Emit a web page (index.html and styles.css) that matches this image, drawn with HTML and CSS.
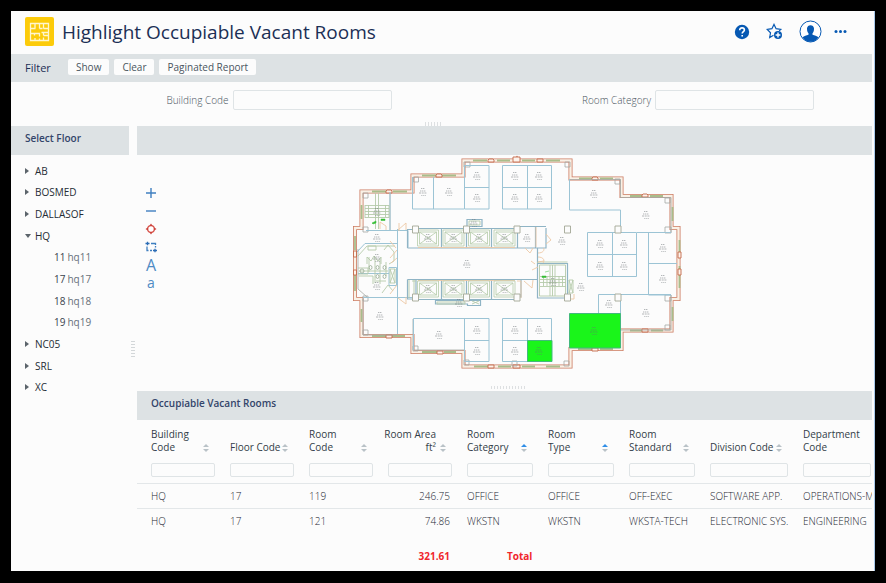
FILE: index.html
```html
<!DOCTYPE html>
<html lang="en">
<head>
<meta charset="utf-8">
<title>Highlight Occupiable Vacant Rooms</title>
<link rel="stylesheet" href="styles.css">
</head>
<body>
<div class="app">
  <header class="header">
    <svg class="logo" viewBox="0 0 29 29" aria-hidden="true">
      <rect width="29" height="29" rx="2" fill="#fccb0a"/>
      <path d="M5.500 6.500h18v17h-18z M10 6.500v5 M5.500 11.500h5 M14.500 6.500v5 M14.500 11.500h3 M18.500 6.500v5 M18.500 11.500h5 M5.500 16.500h9v3 M9.500 16.500v2 M14.500 21.500v2 M10 21v2.500 M23.500 15.500h-7 M18.500 15.500v3 M18.500 20.500v3 M18.500 18.500h5" fill="none" stroke="#fff6cf" stroke-width="1.300"/>
    </svg>
    <h1>Highlight Occupiable Vacant Rooms</h1>
    <nav class="actions">
      <button aria-label="Help"><svg width="16" height="16" viewBox="0 0 16 16"><circle cx="8" cy="8" r="7.200" fill="#0759b3"/><path d="M5.700 6.300c0-3.400 4.700-3 4.700-.3 0 1.600-2.200 1.700-2.200 3.500M8.200 11v1.600" fill="none" stroke="#fff" stroke-width="1.600"/></svg></button>
      <button aria-label="Add favorite"><svg width="17" height="17" viewBox="0 0 17 17"><path d="M7.500 12.300l-3.800 2.200.8-4.700L1.200 6.400l4.700-.7L8 1.400l2.100 4.300 4.700.7-1.600 1.500" fill="none" stroke="#0759b3" stroke-width="1.200"/><circle cx="12" cy="12" r="4" fill="#0759b3"/><path d="M12 9.600v4.800M9.600 12h4.800" stroke="#fff" stroke-width="1.400"/></svg></button>
      <button aria-label="Profile"><svg width="23" height="23" viewBox="0 0 23 23"><circle cx="11.500" cy="11.500" r="10.500" fill="#fff" stroke="#0759b3"/><path d="M8 8.500C8 4 15 4 15 8.500c0 2.500-.6 3.700-1.500 4.700v1.600c2 .8 4.500 1.200 6 2.400-3.500 6-12.500 6-16 0 1.500-1.200 4-1.600 6-2.400v-1.600C8.600 12.200 8 11 8 8.500z" fill="#0759b3"/></svg></button>
      <button aria-label="More"><svg width="13" height="5" viewBox="0 0 13 5"><g fill="#0759b3"><circle cx="2" cy="2.500" r="1.500"/><circle cx="6.500" cy="2.500" r="1.500"/><circle cx="11" cy="2.500" r="1.500"/></g></svg></button>
    </nav>
  </header>

  <section class="filterbar">
    <h2>Filter</h2>
    <button>Show</button>
    <button>Clear</button>
    <button>Paginated Report</button>
  </section>
  <form class="filters">
    <div class="field"><label for="bl">Building Code</label><input id="bl" type="text"></div>
    <div class="field"><label for="rc">Room Category</label><input id="rc" type="text"></div>
  </form>
  <div class="grip top"><span></span></div>

  <div class="body">
    <aside class="side">
      <h2 class="bar">Select Floor</h2>
      <ul class="tree">
        <li>AB</li>
        <li>BOSMED</li>
        <li>DALLASOF</li>
        <li class="open">HQ</li>
        <li class="leaf"><b>11</b> hq11</li>
        <li class="leaf"><b>17</b> hq17</li>
        <li class="leaf"><b>18</b> hq18</li>
        <li class="leaf"><b>19</b> hq19</li>
        <li>NC05</li>
        <li>SRL</li>
        <li>XC</li>
      </ul>
    </aside>
    <div class="gutter"><span></span></div>
    <main class="main">
      <div class="bar"></div>
      <div class="drawing">
        <div class="tools">
          <button aria-label="Zoom in"><svg width="12" height="12" viewBox="0 0 12 12"><path d="M6 1v10M1 6h10" stroke="#3f7fc0" stroke-width="1.400"/></svg></button>
          <button aria-label="Zoom out"><svg width="12" height="12" viewBox="0 0 12 12"><path d="M1 6h10" stroke="#3f7fc0" stroke-width="1.400"/></svg></button>
          <button aria-label="Center"><svg width="12" height="12" viewBox="0 0 12 12"><circle cx="6" cy="6" r="3.300" fill="#fff" stroke="#d8524a" stroke-width="1.300"/><path d="M6 .5L7.500 2.800h-3zM6 11.500L7.500 9.200h-3zM.5 6L2.800 4.500v3zM11.500 6L9.200 4.500v3z" fill="#c93a32"/></svg></button>
          <button aria-label="Zoom window"><svg width="12" height="12" viewBox="0 0 12 12"><path d="M2 5.500V9.500h1.500M5 9.500h2M6 2.500h4.500V4M10.500 5v1.500" fill="none" stroke="#3f7fc0" stroke-width="1.300"/><path d="M.5 2.500h4M2.500 .8v3.400M8 9.500h4M10 7.800v3.400" stroke="#2b6cb5" stroke-width="1.300"/></svg></button>
          <button aria-label="Larger text" class="big">A</button>
          <button aria-label="Smaller text" class="small">a</button>
        </div>
        <svg class="plan" viewBox="350 155 335 218" role="img" aria-label="Floor plan">
          <defs>
            <g id="t" stroke="#6a7176" stroke-width=".7"><path d="M-2-3.500h4M-3-1h6" stroke-dasharray="1.400 .6" opacity=".7"/><path d="M-4 1h8" stroke-dasharray="2 .7" opacity=".7"/><path d="M-2 3.500h5" stroke-dasharray="1.500 .5" opacity=".5"/></g>
            <g id="lift" fill="none" stroke="#b5cbaa" stroke-width=".8"><path d="M-10.500-8h21V8h-21zM-8.500-6h17V6h-17zM-8.500-6L8.500 6M8.500-6L-8.500 6"/><use href="#t"/></g>
            <g id="col"><path d="M-3-3.500h6v7h-6z" fill="#fcfcfc" stroke="#a3a795" stroke-width=".9"/></g>
            <path id="shell" d="M355 263V228h6.500v-36.500h51v-16h51v-15h52.500l1-1.500 1 1.500h52.500v18h51v17.500h50V228h7v71h-7v31.500h-50V349h-51v17.500H463.500V352h-51v-16h-51v-37H355z"/>
          </defs>
          <use href="#shell" fill="none" stroke="#cb7a61" stroke-width="4"/>
          <use href="#shell" fill="none" stroke="#f9f1e6" stroke-width="2.400"/>
          <g fill="none" stroke="#a9bd8b" stroke-width="1.800">
            <path d="M372 191.500h15M393 191.500h14M422 175.500h16M442 175.500h14M473 160.500h14M497 160.500h13M522 160.500h13M546 160.500h14M579 178.500h13M600 178.500h13M630 196h12M650 196h13M672.500 207v14M679.500 240v14M679.500 266v22M672.500 307v14M630 330.500h12M651 330.500h12M578 349h14M600 349h13M474 366.500h14M498 366.500h13M522 366.500h13M546 366.500h14M422 352h15M444 352h12M372 336h14M392 336h13M361.500 309v13M355 236v14M355 271v20M361.500 205v14"/>
          </g>
          <g fill="#fcf3ec" stroke="#c4694a" stroke-width=".9">
            <path d="M386 193v-2l1-1h4l1 1v2zM436 177v-2l1-1h4l1 1v2zM488 162v-2l1-1h4l1 1v2zM592 180v-2l1-1h4l1 1v2zM642 197v-2l1-1h4l1 1v2zM642 332v-3h6v3zM592 351v-3h6v3zM488 368v-3h6v3zM437 354v-3h6v3zM386 338v-3h6v3zM353.500 251h3v6h-3zM353.500 270h3v5h-3zM678 252h3v6h-3zM678 269h3v6h-3zM513 157h7v5h-7zM537 159h6v3h-6zM513 365h7v3h-7z"/>
          </g>
          <g fill="none" stroke="#a5a8a4" stroke-width=".8">
            <path d="M363 193h5v5h-5zM413.500 177h5v5h-5zM464 162h6v5h-6zM565 162h5v5h-5zM615 179h5v5h-5zM665 198h5v5h-5zM665 227h6v6h-6zM665 295h6v6h-6zM665 325h5v5h-5zM564 361h5v5h-5zM464 360h5v5h-5zM413 346h5v5h-5zM363 330h5v5h-5zM363 296h5v5h-5zM363 227h5v5h-5zM512 361h5v5h-5z"/>
            <path d="M569.500 179.500h51v18h50.500v35M671 295v35h-50.500M363 299v36h34M413 319v31h51M390 193v38M358 249v40l9 8"/>
          </g>

          <g fill="none" stroke="#9cc4d5" stroke-width="1">
            <path d="M412.500 177v32H464M433.500 177v32M464.500 165.500h24.500v43.500h-24.500zM464.500 187.500h24.500M502.500 165.500h49v43.500h-49zM502.500 187.500h49M527.500 165.500v43.500"/>
            <path d="M569.500 179v31h51v23M587.500 232.500h49v44h-49zM587.500 254.500h49M612.500 232.500v44M637 232.500h34M648.500 232.500v62.500M648.500 263.500h28.500M648.500 295H671M598.500 313v-18.500H671M620.500 295v36"/>
            <path d="M413.500 350v-31.500H489v43h-24.500v-43M464.500 340.500h24.500M502.500 318.500h49v43h-49zM502.500 340.500h49M527.500 318.500v43"/>
            <path d="M397.500 229v105M366 230.500h42v17M363 297.500h50M390 192v39M357 252l8-8.500h32M389 267.500h7.500v18H389zM358 273.500h31"/>
          </g>
          <g fill="none" stroke="#8fb4c5" stroke-width="1.200">
            <path d="M407.500 248V229.500h5M407.500 248H546V228M418 228.500h97M441.500 228v20M466.500 228v20M491.500 228v20M517.500 226v22M520 226.500h26M535.500 226v22M467 219.500h15v7h-15z"/>
            <path d="M407.500 279.500V299h5M407.500 279.500H521v18M416 280v16M418 299.500h96M441.500 280v20M466.500 280v20M491.500 280v20M435.500 300.500h45v5h-13v-1.500h-32z"/>
            <path d="M537.500 263.500h30V298h-30zM537.500 248v15M521 279.500h16"/>
          </g>
          <g fill="none" stroke="#b5cbaa" stroke-width=".9">
            <path d="M375.500 193v36M378.500 193v36M365 205.500h24M365 208.500h24M365 211.500h24M365 214.500h24M365 217.500h24M365 205v13M389 205v13M368.500 205v12M385.500 205v12"/>
            <path d="M550 265v31M552.500 265v31M555 265v31M540 276.500h26M540 279.500h26M540 282.500h26M540 286.500h26M543.500 276v10M547 276v10M559 276v10M562.500 276v10M539.500 265h26v31h-26z"/>
            <path d="M358 256l9-10h28M368 246h8v4h-8zM367 264v-7l4 4 3-5 4 5 3-4v7M384 250l4-5 6 7v9l-5 3M358 268h10v6h-10M369 257v15M375 257v26M380 260v24M386 262v14M359 271h29M359 276h14v8M376 281h10M382 293l6-8 5 6M390 269h5v14h-5zM390 269l5 14M395 269l-5 14M569 280h4v13h-4zM569 280l4 13M573 280l-4 13M409 280v18M414 280v18M469 221h11v4h-11zM437 302h28v2h-28zM472 301l7 3M479 301l-7 3M537.500 263v-1h30M412 281h4"/>
          </g>
          <g fill="none" stroke="#97aa92" stroke-width=".8"><circle cx="362" cy="271" r="2"/><ellipse cx="370.500" cy="267.500" rx="1.500" ry="2"/><ellipse cx="377.500" cy="267.500" rx="1.500" ry="2"/><ellipse cx="384.500" cy="267.500" rx="1.500" ry="2"/><ellipse cx="377.500" cy="276.500" rx="1.500" ry="2"/><ellipse cx="384.500" cy="276.500" rx="1.500" ry="2"/></g>
          <g fill="none" stroke="#edc8a5" stroke-width=".9">
            <path d="M380 229v-7l6 4v4M398 230l8-7v7M399 223v8M390 241l6 7M390 258l7-8M391 263l6-5M390 294l7-9M398 298l8 6v-7M525 248l5 5 3-5M538 253c6 0 7-4 5-5M538 257c6 0 7 4 5 6M546 234l5 6-5 4M536 227v20M524 281l8 7 1-8M535 264l-4-3M532 270l6-3M517 281h4v17M538 262l6-1M568 299h6v-5M418 247.500h97M418 280.500h97"/>
          </g>
          <path d="M372 223l4-2v2l-3 1zM381 219h4v1.500h-4zM542 276h4v1.500h-4zM545 272l4-1" fill="#35bf35" stroke="#35bf35" stroke-width=".5"/>
          <g><use href="#lift" x="428" y="238"/><use href="#lift" x="453.500" y="238"/><use href="#lift" x="479" y="238"/><use href="#lift" x="504.500" y="238"/><use href="#lift" x="428" y="289"/><use href="#lift" x="453.500" y="289"/><use href="#lift" x="479" y="289"/><use href="#lift" x="504.500" y="289"/></g>
          <g><use href="#col" x="415.500" y="229.500"/><use href="#col" x="466.500" y="229.500"/><use href="#col" x="517" y="229.500"/><use href="#col" x="567.500" y="229.500"/><use href="#col" x="618" y="229.500"/><use href="#col" x="415.500" y="297.500"/><use href="#col" x="466.500" y="297.500"/><use href="#col" x="517" y="297.500"/><use href="#col" x="567.500" y="297.500"/><use href="#col" x="618" y="297.500"/></g>
          <path d="M569.500 313.500h51v34.500h-51zM527.500 340.500h24.500v21h-24.500z" fill="#1af51a" stroke="#43b97c"/>
          <g>
            <use href="#t" x="423" y="192"/><use href="#t" x="449" y="192"/><use href="#t" x="477" y="176"/><use href="#t" x="477" y="198"/><use href="#t" x="515" y="176"/><use href="#t" x="539" y="176"/><use href="#t" x="515" y="198"/><use href="#t" x="539" y="198"/><use href="#t" x="594" y="194"/><use href="#t" x="646" y="215"/><use href="#t" x="600" y="244"/><use href="#t" x="624" y="244"/><use href="#t" x="600" y="266"/><use href="#t" x="624" y="266"/><use href="#t" x="663" y="248"/><use href="#t" x="663" y="279"/><use href="#t" x="646" y="313"/><use href="#t" x="609" y="304"/><use href="#t" x="594" y="331"/><use href="#t" x="539" y="351"/><use href="#t" x="515" y="351"/><use href="#t" x="515" y="330"/><use href="#t" x="539" y="330"/><use href="#t" x="477" y="330"/><use href="#t" x="477" y="351"/><use href="#t" x="439" y="335"/><use href="#t" x="380" y="316"/><use href="#t" x="377" y="238"/><use href="#t" x="377" y="258"/><use href="#t" x="377" y="286"/><use href="#t" x="377" y="212"/><use href="#t" x="467" y="264"/><use href="#t" x="527" y="238"/><use href="#t" x="562" y="241"/><use href="#t" x="581" y="287"/><use href="#t" x="553" y="282"/><use href="#t" x="474" y="223"/><use href="#t" x="459" y="303"/>
          </g>
        </svg>
      </div>
      <div class="grip wide"><span></span></div>
      <h2 class="bar">Occupiable Vacant Rooms</h2>
      <div class="tablewrap">
      <table>
        <colgroup><col class="c1"><col class="c1"><col class="c1"><col class="c1"><col class="c2"><col class="c2"><col class="c2"><col class="c3"><col></colgroup>
        <thead>
          <tr>
            <th><div class="th"><span>Building<br>Code</span><i class="sort"></i></div><input type="text" aria-label="Building Code filter"></th>
            <th><div class="th"><span>Floor Code</span><i class="sort"></i></div><input type="text" aria-label="Floor Code filter"></th>
            <th><div class="th"><span>Room<br>Code</span><i class="sort"></i></div><input type="text" aria-label="Room Code filter"></th>
            <th class="num"><div class="th"><span>Room Area<br>ft²</span><i class="sort"></i></div><input type="text" aria-label="Room Area filter"></th>
            <th><div class="th"><span>Room<br>Category</span><i class="sort up"></i></div><input type="text" aria-label="Room Category filter"></th>
            <th><div class="th"><span>Room<br>Type</span><i class="sort up"></i></div><input type="text" aria-label="Room Type filter"></th>
            <th><div class="th"><span>Room<br>Standard</span><i class="sort"></i></div><input type="text" aria-label="Room Standard filter"></th>
            <th><div class="th"><span>Division Code</span><i class="sort"></i></div><input type="text" aria-label="Division Code filter"></th>
            <th><div class="th"><span>Department<br>Code</span></div><input type="text" aria-label="Department Code filter"></th>
          </tr>
        </thead>
        <tbody>
          <tr><td>HQ</td><td>17</td><td>119</td><td class="num">246.75</td><td>OFFICE</td><td>OFFICE</td><td>OFF-EXEC</td><td>SOFTWARE APP.</td><td>OPERATIONS-M</td></tr>
          <tr><td>HQ</td><td>17</td><td>121</td><td class="num">74.86</td><td>WKSTN</td><td>WKSTN</td><td>WKSTA-TECH</td><td>ELECTRONIC SYS.</td><td>ENGINEERING</td></tr>
        </tbody>
        <tfoot>
          <tr><td></td><td></td><td></td><td class="num">321.61</td><td class="total">Total</td><td></td><td></td><td></td><td></td></tr>
        </tfoot>
      </table>
      </div>
    </main>
  </div>
</div>
</body>
</html>
```
FILE: styles.css
```css
*, *::before, *::after { box-sizing: border-box; }
body {
  margin: 0;
  padding: 11px 11px 12px;
  min-height: 100vh;
  display: flex;
  background: #000;
  font-family: "Open Sans", "Noto Sans", sans-serif;
  font-size: 10px;
  color: #4a5560;
}
.app {
  flex: 1;
  min-width: 0;
  display: flex;
  flex-direction: column;
  background: #fcfcfc;
  border-right: 1px solid #a9c9ea;
  padding-right: 2px;
}
button { font: inherit; color: inherit; border: 0; padding: 0; background: none; }
h1, h2 { margin: 0; font-weight: 500; color: #1b2f55; }
input {
  display: block;
  font: inherit;
  border: 1px solid #dfe4e6;
  border-radius: 2px;
  background: #fcfcfc;
  padding: 0 4px;
}
.header { display: flex; align-items: center; height: 43px; padding: 0 25px 2px 14px; }
.logo { width: 29px; height: 29px; margin-right: 8px; }
h1 { font-size: 19px; line-height: 28px; }
.actions { display: flex; align-items: center; margin-left: auto; }
.actions button { display: flex; }
.actions button + button { margin-left: 16px; }
.actions button:last-child { margin-left: 12px; }

.filterbar { display: flex; align-items: center; height: 28px; padding: 0 0 2px 14px; background: #dde2e4; }
.filterbar h2 { font-size: 11px; width: 43px; }
.filterbar button {
  height: 16px;
  padding: 0 8px;
  margin-right: 5px;
  line-height: 16px;
  font-weight: 500;
  background: #fcfcfc;
  border-radius: 2px;
}
.filters { display: grid; grid-template-columns: 1fr 1fr; height: 39px; align-items: center; padding: 0 58px 3px 0; }
.field { display: flex; align-items: center; justify-content: flex-end; gap: 4px; color: #4a545e; font-weight: 300; }
.field:first-child { padding-right: 21px; }
.field input { width: 159px; height: 20px; }

.grip { height: 5px; display: flex; justify-content: center; padding-top: 1px; }
.grip span { width: 17px; height: 4px; background: repeating-linear-gradient(90deg, #c9cdd0 0 1px, transparent 1px 3px); opacity: .6; }
.grip.top { padding-right: 16px; }
.grip.wide { padding: 0 0 1px 6px; }
.grip.wide span { width: 34px; height: 3px; }

.body { flex: 1; display: flex; }
.side { width: 118px; }
.bar { height: 29px; padding: 0 14px; font-size: 10px; line-height: 25px; font-weight: 600; background: #dde2e4; color: #33456a; }
.tree { list-style: none; display: flex; flex-direction: column; height: 238px; margin: 5px 0 0; padding: 0 0 0 14px; color: #252c35; }
.tree li { flex: 1; display: flex; align-items: center; }
.tree li::before { content: ""; width: 4px; margin-right: 6px; border: 3px solid transparent; border-left: 4px solid #5c646b; border-right: 0; }
.tree .open::before { width: 6px; margin: 0 4px 0 0; border: 3px solid transparent; border-top: 4px solid #5c646b; border-bottom: 0; }
.tree .leaf { padding-left: 29px; color: #68717a; }
.tree .leaf::before { display: none; }
.tree b { font-weight: 400; margin-right: 2px; color: #3a434c; }
.gutter { width: 8px; display: flex; align-items: center; justify-content: center; }
.gutter span { width: 4px; height: 16px; background: repeating-linear-gradient(#d3d7d9 0 1px, transparent 1px 3px); }

.main { flex: 1; min-width: 0; }
.drawing { display: flex; height: 231px; }
.tools { width: 28px; display: flex; flex-direction: column; align-items: center; padding-top: 29px; }
.tools button { display: flex; align-items: center; justify-content: center; height: 18px; width: 16px; color: #4f8bc4; }
.tools .big { font-size: 16px; line-height: 16px; }
.tools .small { font-size: 14px; line-height: 14px; }
.plan { width: 335px; height: 218px; margin-left: 185px; }

.tablewrap { overflow: hidden; }
table { width: 100%; table-layout: fixed; border-collapse: collapse; }
.c1 { width: 79px; }
.c2 { width: 81px; }
.c3 { width: 93px; }
th, td { padding: 0 1px 0 14px; text-align: left; font-weight: 400; white-space: nowrap; }
th { padding-top: 8px; padding-bottom: 6px; font-weight: 500; line-height: 13px; color: #333d48; }
.th { display: flex; align-items: flex-end; justify-content: space-between; height: 26px; margin: 0 6px 9px 0; }
th input { width: 100%; height: 14px; }
.num, .num .th { text-align: right; }
.num .th { justify-content: flex-end; gap: 4px; }
td.num { padding-right: 3px; }
tr { border-bottom: 1px solid #e3e7e9; }
tbody tr:last-child, tfoot tr { border: 0; }
td { height: 25px; font-weight: 300; color: #1d2732; }
.sort { flex: none; width: 6px; height: 8px; margin-bottom: 2px; display: flex; flex-direction: column; justify-content: space-between; }
.sort::before, .sort::after { content: ""; border: 3px solid transparent; }
.sort::before { border-top: 0; border-bottom-color: #b9c2c7; }
.sort::after { border-bottom: 0; border-top-color: #b9c2c7; }
.sort.up::before { border-bottom-color: #2f8ee8; }
tfoot td { height: 37px; padding-top: 8px; font-weight: 700; color: #f0262c; }
tfoot .total { padding-left: 54px; }
```
